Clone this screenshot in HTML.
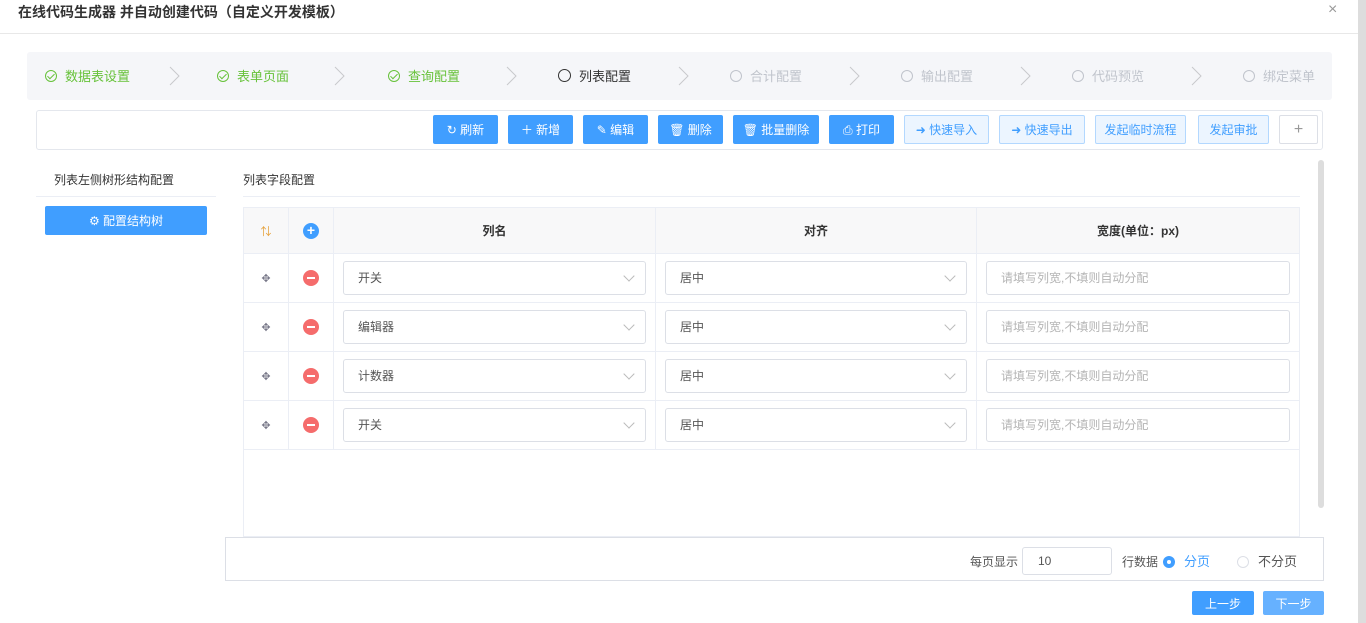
<!DOCTYPE html>
<html><head><meta charset="utf-8"><style>
*{box-sizing:border-box;margin:0;padding:0}
body{width:1366px;height:623px;overflow:hidden;background:#fff;font-family:"Liberation Sans","Noto Sans CJK SC",sans-serif;font-size:12px;color:#333;position:relative}
.a{position:absolute}
.title{left:18px;top:2px;font-size:14px;font-weight:bold;color:#333}
.close{left:1328px;top:1px;color:#999;font-size:16px}
.hl{left:0;top:33px;width:1358px;height:1px;background:#e8e8e8}
.sb{left:1358px;top:0;width:8px;height:623px;background:#ddd}
.steps{left:27px;top:52px;width:1305px;height:48px;background:#f5f6f9;border-radius:3px}
.st{top:66px;font-size:13px;display:flex;align-items:center;gap:8px}
.ci{width:12px;height:12px;border-radius:50%;border:1px solid currentColor;display:inline-block;position:relative}
.ok{color:#67c23a}.ok .ci::after{content:"";position:absolute;left:3px;top:1px;width:3px;height:6px;border:solid currentColor;border-width:0 1px 1px 0;transform:rotate(45deg)}
.cur{color:#333}.cur .ci{width:13px;height:13px;border-width:1.5px}
.dis{color:#c0c4cc}
.chev{top:66px}
.tb{left:36px;top:110px;width:1287px;height:40px;border:1px solid #e4e7ed;border-radius:3px}
.btn{top:115px;height:29px;background:#409eff;color:#fff;border-radius:2px;display:flex;align-items:center;justify-content:center;font-size:12px}
.lb{background:#ecf5ff;border:1px solid #b3d8ff;color:#409eff}
.pb{background:#fff;border:1px solid #dcdfe6;color:#999;font-size:16px}
.sec{font-size:12px;color:#333}
.line{height:1px;background:#ebeef5}
table{position:absolute;left:243px;top:207px;border-collapse:collapse;width:1057px}
td,th{border:1px solid #ebeef5;height:49px;text-align:center;vertical-align:middle}
th{background:#f8f8f9;font-weight:bold;height:46px}
.sel{margin:0 9px;height:34px;border:1px solid #dcdfe6;border-radius:3px;text-align:left;padding-left:14px;line-height:32px;position:relative;color:#555}
.sel::after{content:"";position:absolute;right:12px;top:10px;width:7px;height:7px;border:solid #bbb;border-width:0 1px 1px 0;transform:rotate(45deg)}
.inp{margin:0 9px;height:34px;border:1px solid #dcdfe6;border-radius:3px;text-align:left;padding-left:14px;line-height:32px;color:#b4b4b4}
.rm{display:inline-block;width:16px;height:16px;border-radius:50%;background:#f56c6c;position:relative;vertical-align:middle}
.rm::after{content:"";position:absolute;left:4px;top:7px;width:8px;height:2px;background:#fff}
.ad{display:inline-block;width:16px;height:16px;border-radius:50%;background:#409eff;color:#fff;font-size:14px;line-height:15px;font-weight:bold}
.mv{color:#778;font-size:11px}
</style></head><body>
<div class="a title">在线代码生成器 并自动创建代码（自定义开发模板）</div>
<div class="a close">×</div>
<div class="a hl"></div>
<div class="a sb"></div>
<div class="a steps"></div>
<div class="a st ok" style="left:45px"><span class="ci"></span>数据表设置</div>
<svg class="a chev" style="left:169px" width="12" height="20"><path d="M1 1L10 10L1 19" fill="none" stroke="#c8c9cc"/></svg>
<div class="a st ok" style="left:217px"><span class="ci"></span>表单页面</div>
<svg class="a chev" style="left:334px" width="12" height="20"><path d="M1 1L10 10L1 19" fill="none" stroke="#c8c9cc"/></svg>
<div class="a st ok" style="left:388px"><span class="ci"></span>查询配置</div>
<svg class="a chev" style="left:506px" width="12" height="20"><path d="M1 1L10 10L1 19" fill="none" stroke="#c8c9cc"/></svg>
<div class="a st cur" style="left:558px"><span class="ci"></span>列表配置</div>
<svg class="a chev" style="left:678px" width="12" height="20"><path d="M1 1L10 10L1 19" fill="none" stroke="#c8c9cc"/></svg>
<div class="a st dis" style="left:730px"><span class="ci"></span>合计配置</div>
<svg class="a chev" style="left:849px" width="12" height="20"><path d="M1 1L10 10L1 19" fill="none" stroke="#c8c9cc"/></svg>
<div class="a st dis" style="left:901px"><span class="ci"></span>输出配置</div>
<svg class="a chev" style="left:1020px" width="12" height="20"><path d="M1 1L10 10L1 19" fill="none" stroke="#c8c9cc"/></svg>
<div class="a st dis" style="left:1072px"><span class="ci"></span>代码预览</div>
<svg class="a chev" style="left:1191px" width="12" height="20"><path d="M1 1L10 10L1 19" fill="none" stroke="#c8c9cc"/></svg>
<div class="a st dis" style="left:1243px"><span class="ci"></span>绑定菜单</div>

<div class="a tb"></div>
<div class="a btn" style="left:433px;width:65px">↻ 刷新</div>
<div class="a btn" style="left:508px;width:65px">＋ 新增</div>
<div class="a btn" style="left:583px;width:65px">✎ 编辑</div>
<div class="a btn" style="left:658px;width:65px">🗑 删除</div>
<div class="a btn" style="left:733px;width:86px">🗑 批量删除</div>
<div class="a btn" style="left:829px;width:65px">⎙ 打印</div>
<div class="a btn lb" style="left:904px;width:85px">➜ 快速导入</div>
<div class="a btn lb" style="left:999px;width:86px">➜ 快速导出</div>
<div class="a btn lb" style="left:1095px;width:91px">发起临时流程</div>
<div class="a btn lb" style="left:1198px;width:71px">发起审批</div>
<div class="a btn pb" style="left:1279px;width:39px">+</div>

<div class="a sec" style="left:54px;top:171px">列表左侧树形结构配置</div>
<div class="a line" style="left:36px;top:196px;width:180px"></div>
<div class="a btn" style="left:45px;top:206px;width:162px;height:29px">⚙ 配置结构树</div>
<div class="a sec" style="left:243px;top:171px">列表字段配置</div>
<div class="a line" style="left:243px;top:196px;width:1057px"></div>
<div class="a" style="left:1318px;top:160px;width:6px;height:348px;background:#ddd;border-radius:3px"></div>

<div class="a" style="left:243px;top:207px;width:1057px;height:330px;border:1px solid #ebeef5"></div>
<table>
<tr><th style="width:45px;color:#e6a23c;font-weight:normal;font-size:11px">⇅</th><th style="width:45px"><span class="ad">+</span></th><th style="width:322px">列名</th><th style="width:321px">对齐</th><th>宽度(单位：px)</th></tr>
<tr><td class="mv">✥</td><td><span class="rm"></span></td><td><div class="sel">开关</div></td><td><div class="sel">居中</div></td><td><div class="inp">请填写列宽,不填则自动分配</div></td></tr>
<tr><td class="mv">✥</td><td><span class="rm"></span></td><td><div class="sel">编辑器</div></td><td><div class="sel">居中</div></td><td><div class="inp">请填写列宽,不填则自动分配</div></td></tr>
<tr><td class="mv">✥</td><td><span class="rm"></span></td><td><div class="sel">计数器</div></td><td><div class="sel">居中</div></td><td><div class="inp">请填写列宽,不填则自动分配</div></td></tr>
<tr><td class="mv">✥</td><td><span class="rm"></span></td><td><div class="sel">开关</div></td><td><div class="sel">居中</div></td><td><div class="inp">请填写列宽,不填则自动分配</div></td></tr>
</table>

<div class="a" style="left:225px;top:537px;width:1099px;height:44px;border:1px solid #dcdfe6;background:#fff"></div>
<div class="a" style="left:970px;top:553px;color:#555">每页显示</div>
<div class="a" style="left:1022px;top:547px;width:90px;height:28px;border:1px solid #dcdfe6;border-radius:3px;padding-left:15px;line-height:26px;color:#555">10</div>
<div class="a" style="left:1122px;top:553px;color:#555">行数据</div>
<div class="a" style="left:1163px;top:556px;width:12px;height:12px;border-radius:50%;background:#409eff"><div style="margin:4px;width:4px;height:4px;border-radius:50%;background:#fff"></div></div>
<div class="a" style="left:1184px;top:551px;color:#409eff;font-size:13px">分页</div>
<div class="a" style="left:1237px;top:556px;width:12px;height:12px;border-radius:50%;border:1px solid #dcdfe6"></div>
<div class="a" style="left:1258px;top:551px;color:#555;font-size:13px">不分页</div>
<div class="a btn" style="left:1192px;top:591px;width:62px;height:24px">上一步</div>
<div class="a btn" style="left:1263px;top:591px;width:61px;height:24px;background:#66b1ff">下一步</div>
</body></html>
